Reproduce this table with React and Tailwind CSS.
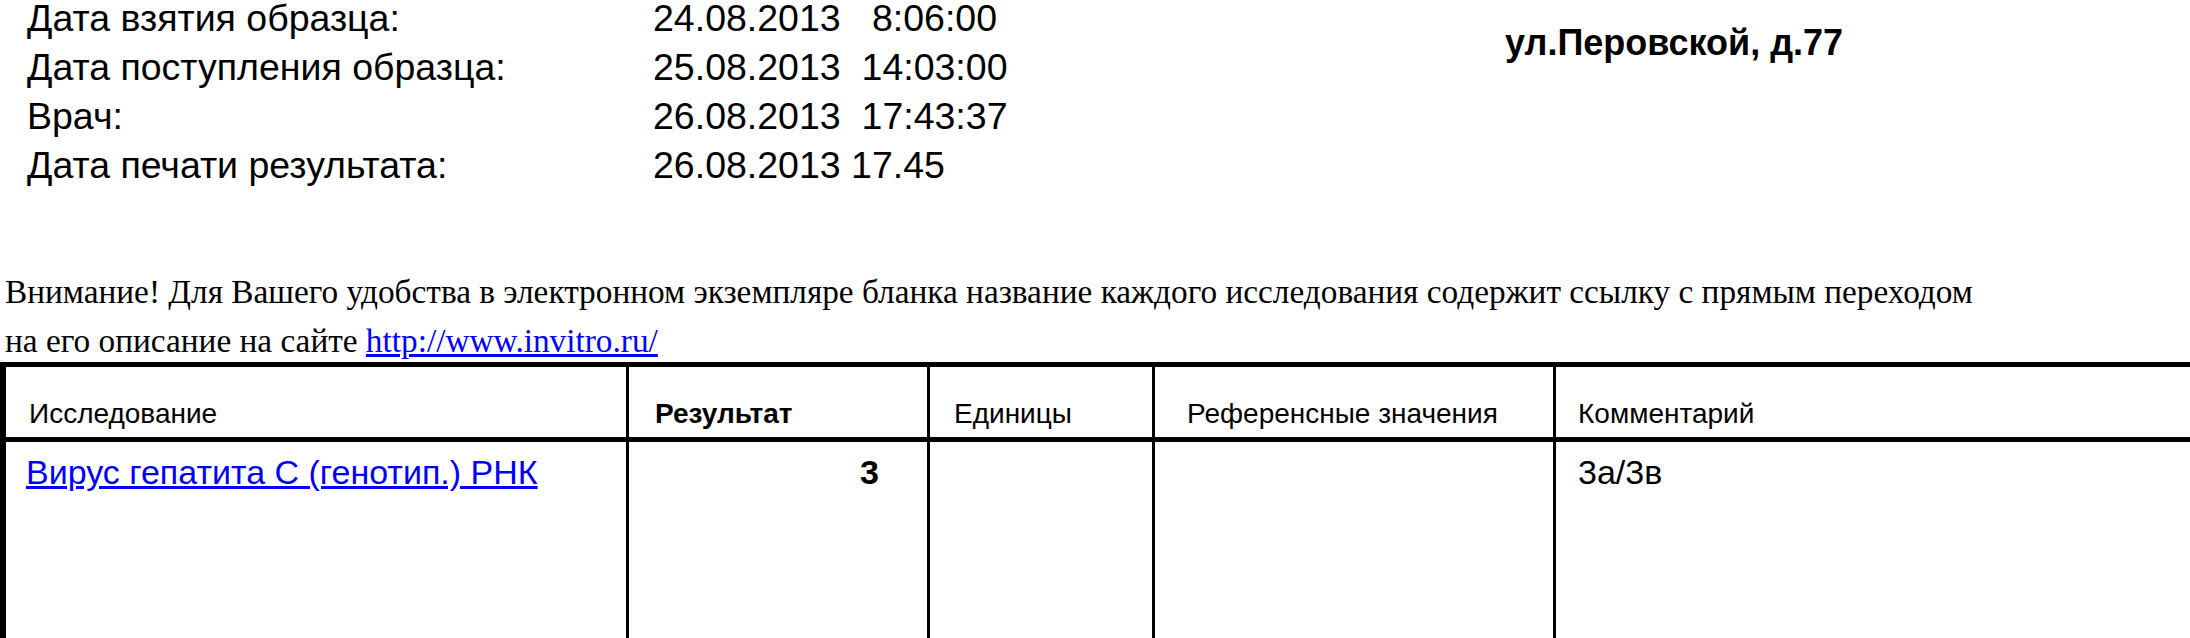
const rows = [
  { label: "Дата взятия образца:", value: "24.08.2013   8:06:00" },
  { label: "Дата поступления образца:", value: "25.08.2013  14:03:00" },
  { label: "Врач:", value: "26.08.2013  17:43:37" },
  { label: "Дата печати результата:", value: "26.08.2013 17.45" },
];

const App = () => {
  return (
    <div className="w-[2190px] h-[638px] overflow-hidden bg-white text-black">
      {/* header info */}
      <div className="flex font-['Liberation_Sans',Arial,sans-serif]">
        <div className="w-[1505px] shrink-0 pl-[27px] grid grid-cols-[626px_auto] gap-y-[13px] text-[37.5px] leading-[36px]">
          {rows.map((row) => (
            <div key={row.label} className="contents">
              <span className="whitespace-pre">{row.label}</span>
              <span className="whitespace-pre">{row.value}</span>
            </div>
          ))}
        </div>
        <div className="pt-[18px] text-[36px] leading-[49px] font-bold whitespace-nowrap">
          ул.Перовской, д.77
        </div>
      </div>

      {/* notice */}
      <p className="mt-[84px] pl-[5px] font-['Liberation_Serif','Times_New_Roman',serif] text-[33.3px] leading-[49px] whitespace-nowrap">
        Внимание! Для Вашего удобства в электронном экземпляре бланка название каждого исследования содержит ссылку с прямым переходом
        <br />
        на его описание на сайте{" "}
        <a href="#" className="text-[#0000ff] underline">
          http://www.invitro.ru/
        </a>
      </p>

      {/* results table */}
      <div className="-mt-[3px] w-[2400px] border-t-[5px] border-black font-['Liberation_Sans',Arial,sans-serif]">
        <div className="flex h-[75px] border-b-[5px] border-black text-[28px] leading-[32px]">
          <div className="w-[629px] shrink-0 border-l-[6px] border-r-[3px] border-black pl-[23px] pt-[31px]">
            Исследование
          </div>
          <div className="w-[301px] shrink-0 border-r-[3px] border-black pl-[26px] pt-[31px] font-bold">
            Результат
          </div>
          <div className="w-[225px] shrink-0 border-r-[3px] border-black pl-[24px] pt-[31px]">
            Единицы
          </div>
          <div className="w-[401px] shrink-0 border-r-[3px] border-black pl-[32px] pt-[31px]">
            Референсные значения
          </div>
          <div className="flex-1 pl-[22px] pt-[31px]">Комментарий</div>
        </div>
        <div className="flex h-[220px] text-[34px] leading-[39px]">
          <div className="w-[629px] shrink-0 border-l-[6px] border-r-[3px] border-black pl-[20px] pt-[11px]">
            <a href="#" className="text-[#0000ff] underline">
              Вирус гепатита С (генотип.) РНК
            </a>
          </div>
          <div className="w-[301px] shrink-0 border-r-[3px] border-black pr-[48px] pt-[11px] text-right font-bold">
            3
          </div>
          <div className="w-[225px] shrink-0 border-r-[3px] border-black"></div>
          <div className="w-[401px] shrink-0 border-r-[3px] border-black"></div>
          <div className="flex-1 pl-[22px] pt-[11px]">3а/3в</div>
        </div>
      </div>
    </div>
  );
};

export default App;
